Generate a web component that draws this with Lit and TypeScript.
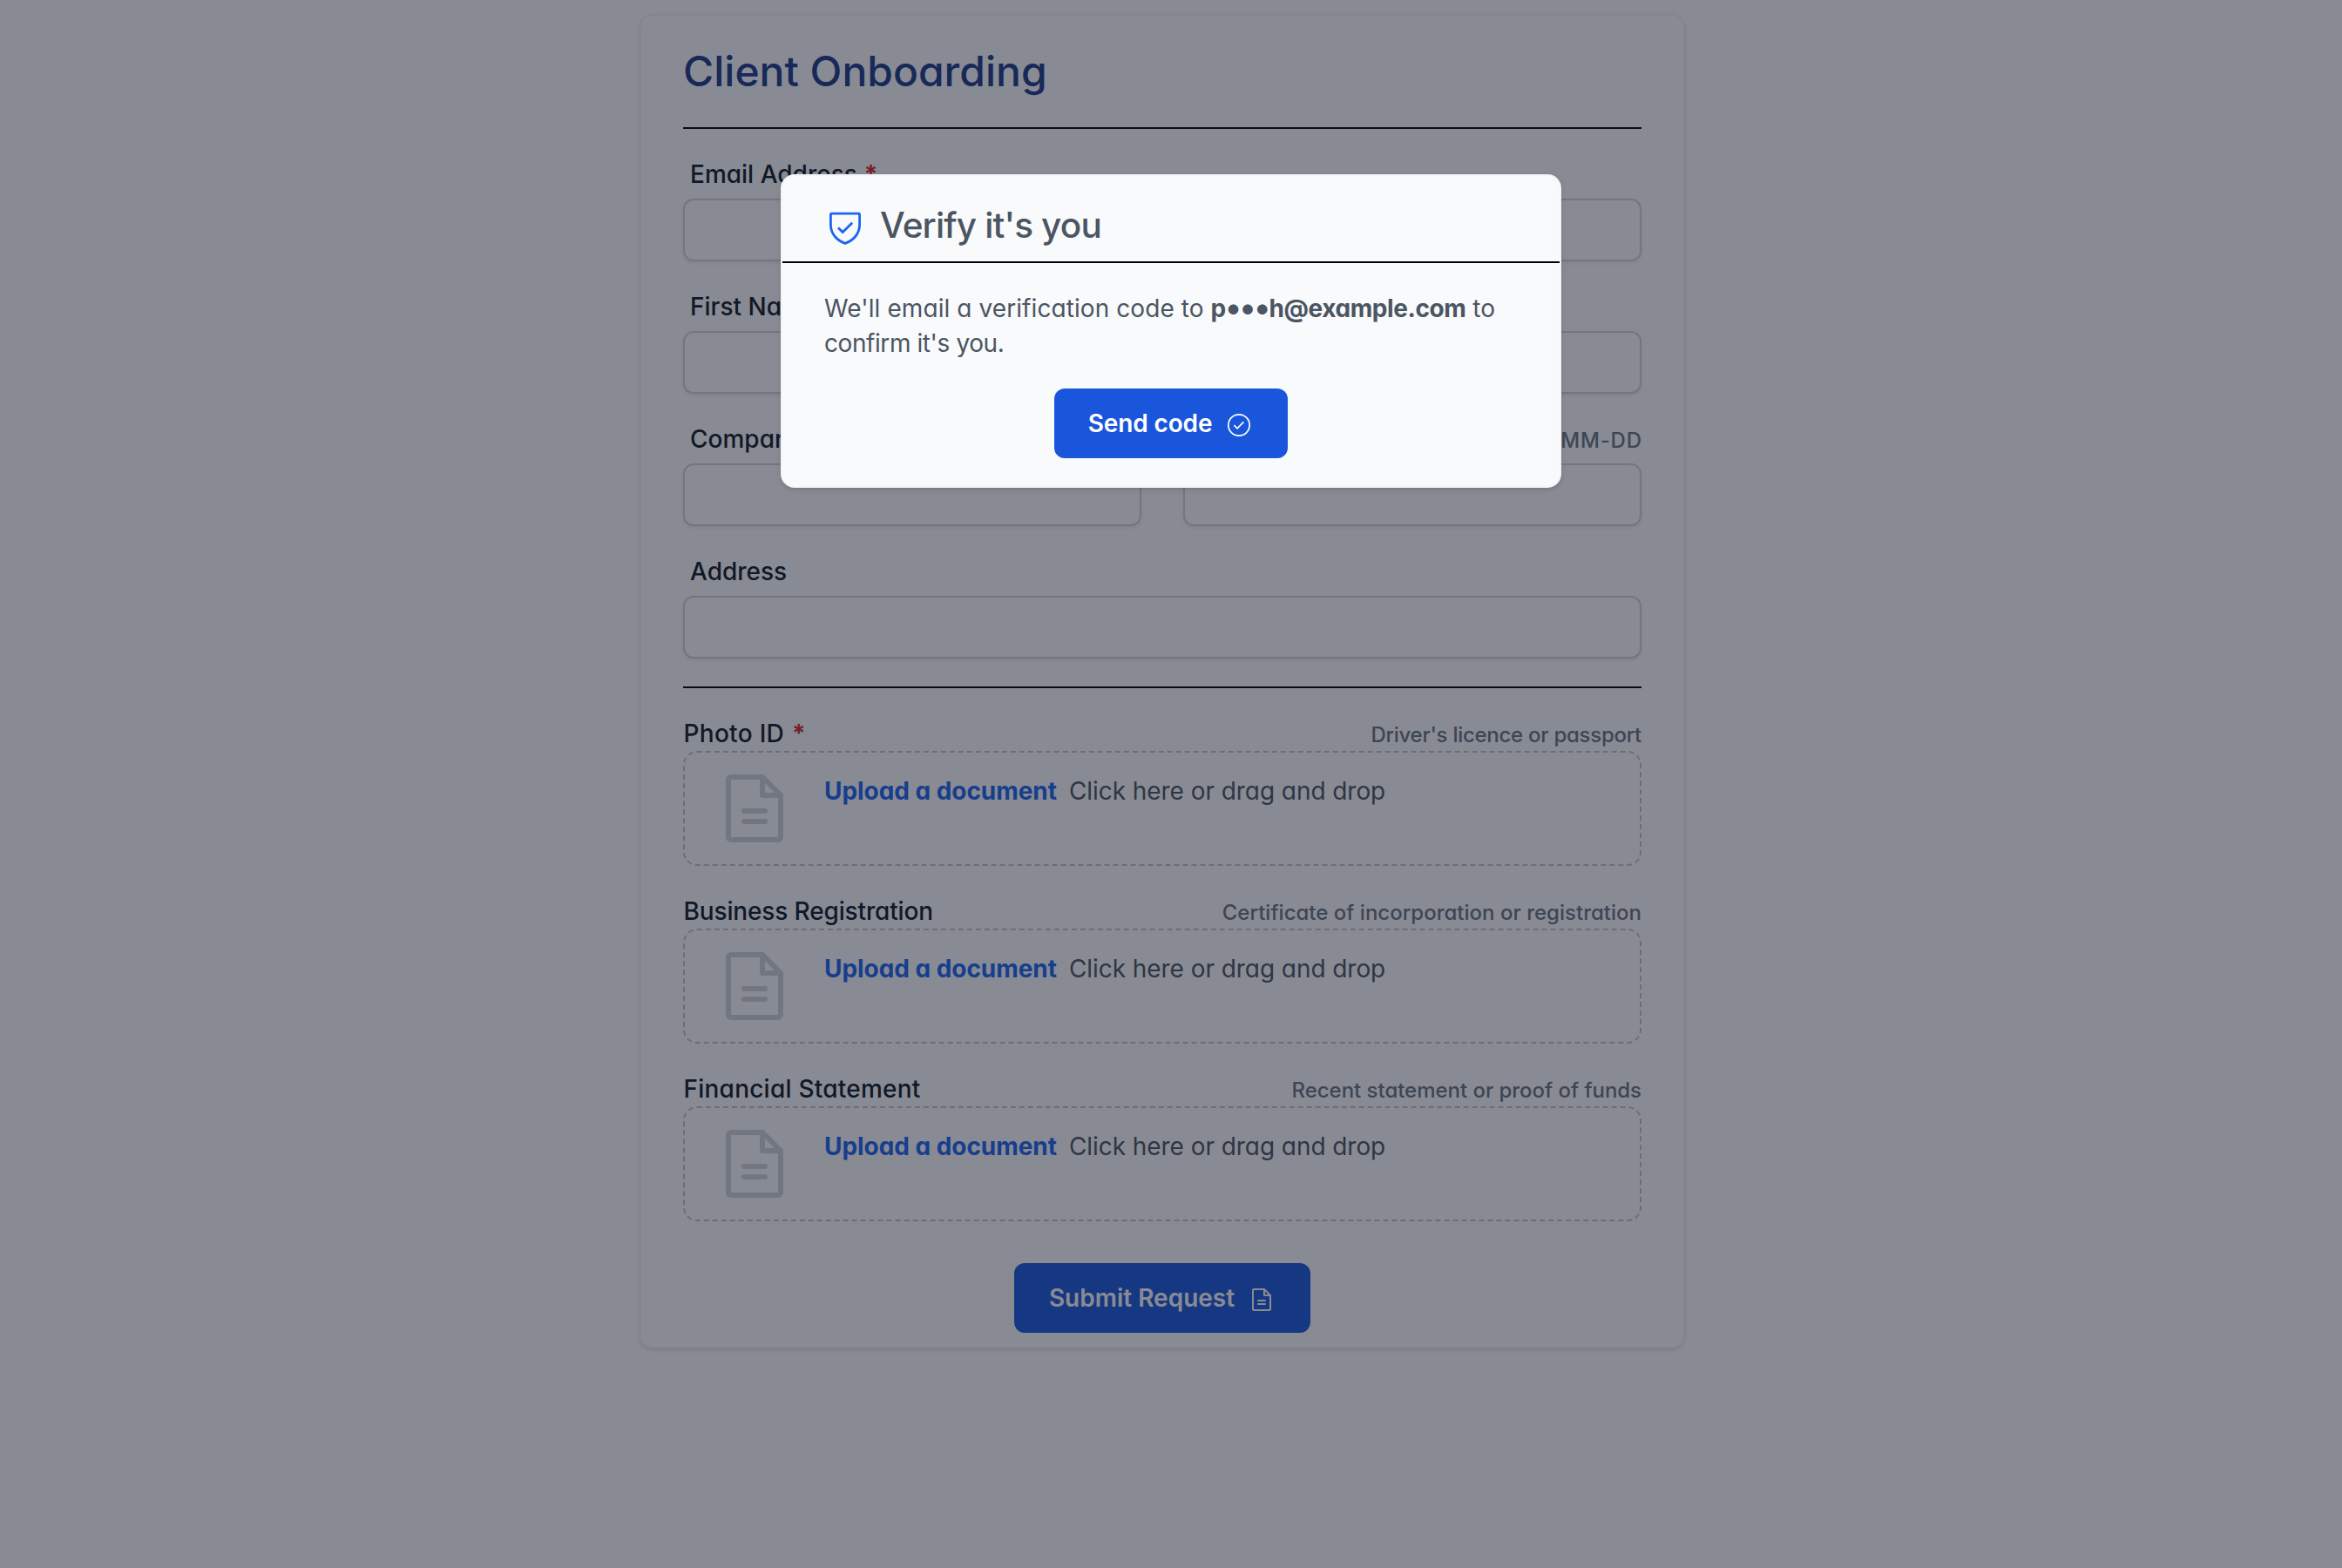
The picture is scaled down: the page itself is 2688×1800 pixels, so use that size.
import { LitElement, html, css, svg } from "lit";
import { customElement, property } from "lit/decorators.js";

@customElement("doc-icon")
class DocIcon extends LitElement {
  static styles = css`
    :host { display: block; flex: none; }
    .glyph { display: block; width: 100%; height: 100%; }
  `;
  render() {
    return html`<svg class="glyph" viewBox="0 0 15 15" fill="none" stroke="currentColor">
      ${svg`<path d="M12.5 5V13a.5.5 0 0 1-.5.5H3a.5.5 0 0 1-.5-.5V2a.5.5 0 0 1 .5-.5h6l3.5 3.5Z" />
      <path d="M9 1.5V5h3.5" stroke-linejoin="round" />
      <path d="M5.5 8h4M5.5 10h4" stroke-linecap="round" />`}
    </svg>`;
  }
}

@customElement("form-field")
class FormField extends LitElement {
  @property() label = "";
  @property() hint = "";
  @property({ type: Boolean }) required = false;
  static styles = css`
    :host { display: flex; flex-direction: column; gap: 8px; min-width: 0; }
    .row { display: flex; justify-content: space-between; align-items: flex-start; height: 40px; padding-left: 8px; }
    .label { font-size: 28px; line-height: 40px; font-weight: 500; color: #111827; }
    .star { color: #e02424; font-weight: 700; margin-left: 8px; }
    .hint { font-size: 24px; line-height: 43px; font-weight: 500; color: #6b7280; letter-spacing: 0.8px; margin-right: -0.8px; }
    .box { height: 72px; box-sizing: border-box; border: 2px solid #d1d5db; border-radius: 12px; background: #fff;
      box-shadow: 0 2px 4px rgba(0, 0, 0, 0.08); }
  `;
  render() {
    return html`
      <div class="row">
        <span class="label">${this.label}${this.required ? html`<span class="star">*</span>` : ""}</span>
        <span class="hint">${this.hint}</span>
      </div>
      <div class="box"></div>`;
  }
}

@customElement("upload-field")
class UploadField extends LitElement {
  @property() label = "";
  @property() hint = "";
  @property({ type: Number }) tracking = 0;
  @property({ type: Number }) hintTracking = 0;
  @property({ type: Boolean }) required = false;
  static styles = css`
    :host { display: block; }
    .row { display: flex; justify-content: space-between; align-items: flex-start; height: 40px; padding-left: 0.5px; }
    .label { font-size: 28px; line-height: 40px; font-weight: 500; color: #111827; }
    .star { color: #e02424; font-weight: 700; margin-left: 9px; }
    .hint { font-size: 24px; line-height: 43px; font-weight: 500; color: #6b7280; }
    .zone { display: flex; height: 132px; box-sizing: border-box; border: 2px dashed #c3c5c9; border-radius: 16px; padding: 19px 35px; gap: 35px; }
    .icon { width: 90px; height: 90px; color: #d1d5db; }
    .text { display: flex; gap: 14px; padding-top: 5px; font-size: 28px; line-height: 40px; }
    .link { font-weight: 700; color: #1c64f2; letter-spacing: -0.05px; }
    .note { color: #4b5563; letter-spacing: -0.06px; }
  `;
  render() {
    return html`
      <div class="row">
        <span class="label" style="letter-spacing:${this.tracking}px">${this.label}${this.required ? html`<span class="star">*</span>` : ""}</span>
        <span class="hint" style="letter-spacing:${this.hintTracking}px">${this.hint}</span>
      </div>
      <div class="zone">
        <doc-icon class="icon"></doc-icon>
        <div class="text"><span class="link">Upload a document</span><span class="note">Click here or drag and drop</span></div>
      </div>`;
  }
}

@customElement("app-root")
class AppRoot extends LitElement {
  static styles = css`
    :host { display: block; position: relative; width: 2688px; height: 1800px; overflow: hidden; background: #fff;
      font-family: Inter, "Liberation Sans", sans-serif; font-feature-settings: "cv11"; }
    .page { display: flex; justify-content: center; padding: 16px 20px 0 0; }
    .card { width: 1200px; box-sizing: border-box; border: 2px solid #f3f4f6; border-radius: 16px; padding: 28px 48px 16px;
      box-shadow: 0 2px 6px rgba(0, 0, 0, 0.1), 0 2px 4px -2px rgba(0, 0, 0, 0.1); }
    .title { margin: 0 0 28px; font-size: 48px; line-height: 72px; font-weight: 500; color: #1e3a8a; }
    .rule { height: 2px; background: #000; }
    .group { display: flex; flex-direction: column; gap: 32px; padding: 32px 0; }
    .uploads { padding-bottom: 48px; }
    .pair { display: grid; grid-template-columns: 1fr 1fr; gap: 48px; }
    .actions { display: flex; justify-content: center; }
    .button { display: flex; align-items: center; gap: 16px; height: 80px; box-sizing: border-box; border: 0; border-radius: 12px;
      padding: 0 41px 0 40px; background: #1a56db; color: #fff; font: inherit; font-feature-settings: inherit;
      font-size: 28px; font-weight: 600; line-height: 40px; letter-spacing: 0; }
    .send { padding-left: 39px; letter-spacing: -0.12px; }
    .small { width: 30px; height: 30px; margin-top: 4px; flex: none; }
    .overlay { position: absolute; inset: 0; background: rgba(17, 24, 39, 0.5); display: flex; justify-content: center; align-items: flex-start; padding-top: 200px; }
    .modal { width: 896px; box-sizing: border-box; border: 2px solid #f3f4f6; border-radius: 16px; background: #f9fafb; color: #4b5563;
      box-shadow: 0 2px 6px rgba(0, 0, 0, 0.1), 0 2px 4px -2px rgba(0, 0, 0, 0.1); }
    .head { display: flex; align-items: center; gap: 16px; height: 98px; box-sizing: border-box; padding: 29px 48px 13px; }
    .shield { width: 48px; height: 48px; margin-top: 5px; color: #1c64f2; flex: none; }
    .heading { margin: 0; font-size: 40.5px; line-height: 56px; font-weight: 500; letter-spacing: -0.85px; }
    .body { padding: 32px 48px; }
    .copy { margin: 0 0 32px; font-size: 28px; line-height: 40px; letter-spacing: 0.08px; }
    .strong { font-weight: 700; letter-spacing: -0.42px; }
    .mask { font-size: 37px; line-height: 0; vertical-align: -1.5px; letter-spacing: -1px; }
    .tight { letter-spacing: -0.42px; }
  `;
  render() {
    return html`
      <div class="page">
        <main class="card">
          <h1 class="title">Client Onboarding</h1>
          <div class="rule"></div>
          <div class="group">
            <form-field label="Email Address" required></form-field>
            <form-field label="First Name"></form-field>
            <div class="pair">
              <form-field label="Company"></form-field>
              <form-field hint="YYYY-MM-DD"></form-field>
            </div>
            <form-field label="Address"></form-field>
          </div>
          <div class="rule"></div>
          <div class="group uploads">
            <upload-field label="Photo ID" tracking="0.3" hint="Driver's licence or passport" hintTracking="-0.27" required></upload-field>
            <upload-field label="Business Registration" tracking="-0.14" hint="Certificate of incorporation or registration" hintTracking="0.01"></upload-field>
            <upload-field label="Financial Statement" tracking="0.23" hint="Recent statement or proof of funds" hintTracking="-0.03"></upload-field>
          </div>
          <div class="actions">
            <button class="button"><span>Submit Request</span><doc-icon class="small"></doc-icon></button>
          </div>
        </main>
      </div>
      <div class="overlay">
        <section class="modal">
          <div class="head">
            <svg class="shield" viewBox="0 0 48 48" fill="none" stroke="currentColor" stroke-width="2.8">
              <path d="M8.4 7.2H39.6a1 1 0 0 1 1 1V20C40.6 30.2 33.6 38 24 41.4C14.4 38 7.4 30.2 7.4 20V8.2a1 1 0 0 1 1-1Z" />
              <path d="M16 23.4l5.2 5.2L32.2 17.8" />
            </svg>
            <h2 class="heading">Verify it's you</h2>
          </div>
          <div class="rule"></div>
          <div class="body">
            <p class="copy">We'll email a verification code to <b class="strong">p<span class="mask">•••</span>h@example.com</b> to <span class="tight">confirm it's you.</span></p>
            <div class="actions">
              <button class="button send"><span>Send code</span>
                <svg class="small" viewBox="0 0 15 15" fill="none" stroke="currentColor">
                  <circle cx="7.5" cy="7.5" r="6.1" stroke-width="0.85" />
                  <path d="M4.7 7.6l1.8 1.8 3.7-3.7" stroke-width="0.85" />
                </svg>
              </button>
            </div>
          </div>
        </section>
      </div>`;
  }
}
